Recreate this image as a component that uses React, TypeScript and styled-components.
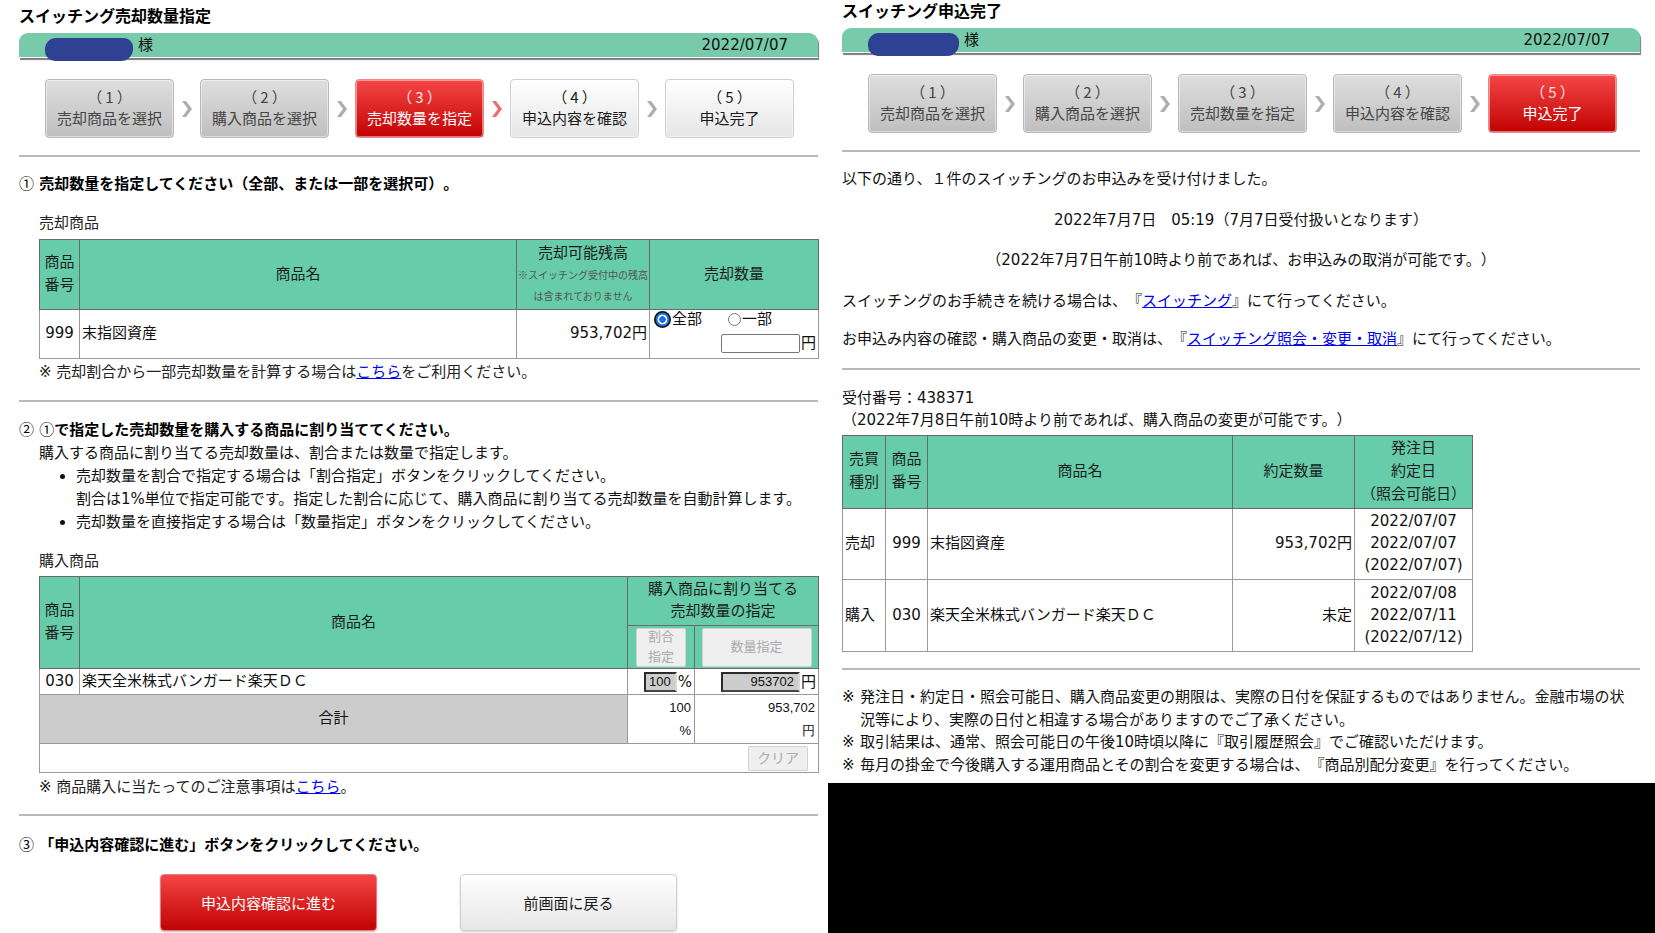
import React from "react";
import styled, { createGlobalStyle, css } from "styled-components";

const GlobalStyle = createGlobalStyle`
  html, body { margin: 0; padding: 0; background: #fff; }
  body {
    font-family: "DejaVu Sans", "Noto Sans CJK JP", sans-serif;
    font-size: 15px;
    color: #111;
    text-spacing-trim: space-all;
  }
  * { box-sizing: border-box; }
`;

const Page = styled.div`
  display: flex;
  width: 1655px;
  height: 933px;
  overflow: hidden;
`;

const LeftPane = styled.div`
  width: 828px;
  height: 933px;
  padding: 7px 10px 0 19px;
  background: #fff;
`;

const RightColumn = styled.div`
  width: 827px;
  height: 933px;
  background: #000;
`;

const RightPane = styled.div`
  height: 783px;
  padding: 2px 15px 0 14px;
  background: #fff;
`;

const PageTitle = styled.h1`
  margin: 0;
  font-size: 16px;
  font-weight: bold;
  line-height: 20px;
  color: #000;
`;

const CustomerBar = styled.div`
  margin-top: 6px;
  height: 25px;
  display: flex;
  align-items: center;
  padding: 0 30px 0 26px;
  background: #77cbab;
  border-radius: 9px 9px 0 0;
  border-bottom: 1px solid #fff;
  box-shadow: 1px 2px 1px #7c7c7c;
  font-size: 15px;
  line-height: 20px;
  color: #111;
`;

const NameMask = styled.span<{ $w: number }>`
  align-self: flex-start;
  margin-top: 5px;
  width: ${(p) => p.$w}px;
  height: 23px;
  border-radius: 11px 9px 12px 10px;
  background: #2e4192;
  filter: blur(0.6px);
`;

const Honorific = styled.span`
  margin-left: 5px;
`;

const BarDate = styled.span`
  margin-left: auto;
`;

const StepList = styled.div`
  margin-top: 21px;
  display: flex;
  align-items: center;
  padding-left: 26px;
`;

type StepState = "done" | "current" | "todo";

const stepSkins = {
  done: css`
    background: linear-gradient(#dedede, #bfbfbf);
    border: 1px solid #b8b8b8;
    color: #444;
  `,
  current: css`
    background: linear-gradient(#f64646, #c10202);
    border: 1px solid #e98a8a;
    color: #fff;
  `,
  todo: css`
    background: linear-gradient(#ffffff, #e5e5e5);
    border: 1px solid #cfcfcf;
    color: #1a1a1a;
  `,
};

const Step = styled.div<{ $state: StepState }>`
  width: 129px;
  height: 59px;
  border-radius: 4px;
  display: flex;
  flex-direction: column;
  align-items: center;
  justify-content: center;
  padding-bottom: 1px;
  font-size: 15px;
  line-height: 23px;
  box-shadow: inset 0 0 0 1px rgba(255, 255, 255, 0.45);
  ${(p) => stepSkins[p.$state]}
`;

const StepNum = styled.span<{ $state: StepState }>`
  font-family: "Noto Sans CJK JP", sans-serif;
  letter-spacing: 3px;
  padding-left: 3px;
  color: ${(p) => (p.$state === "current" ? "#ffe4e4" : "inherit")};
`;

const StepArrow = styled.div`
  width: 26px;
  display: flex;
  justify-content: center;
  align-items: center;
`;

const Divider = styled.div<{ $mt: number }>`
  margin-top: ${(p) => p.$mt}px;
  height: 2px;
  background: #b9b9b9;
`;

const SectionHeading = styled.h2<{ $mt: number }>`
  margin: ${(p) => p.$mt}px 0 0 0;
  font-size: 15px;
  font-weight: bold;
  line-height: 20px;
  color: #000;
`;

const CircledNum = styled.span`
  font-family: "Noto Sans CJK JP", sans-serif;
  font-weight: normal;
`;

const SubLabel = styled.div<{ $mt: number }>`
  margin: ${(p) => p.$mt}px 0 0 20px;
  line-height: 20px;
  color: #222;
`;

const Indented = styled.div<{ $mt: number }>`
  margin: ${(p) => p.$mt}px 0 0 20px;
  line-height: 23px;
  color: #111;
`;

const BulletList = styled.ul`
  margin: 0;
  padding-left: 37px;
  line-height: 23px;
`;

const DataTable = styled.table<{ $mt: number; $ml: number; $w: number }>`
  margin: ${(p) => p.$mt}px 0 0 ${(p) => p.$ml}px;
  width: ${(p) => p.$w}px;
  border-collapse: collapse;
  table-layout: fixed;
  font-size: 15px;
`;

const Row = styled.tr<{ $h: number }>`
  height: ${(p) => p.$h}px;
`;

const Th = styled.th<{ $flush?: boolean; $tall?: boolean }>`
  background: #66cca9;
  border: 1px solid #6a6a6a;
  font-weight: normal;
  text-align: center;
  vertical-align: middle;
  padding: 0 0 ${(p) => (p.$flush ? 0 : 2)}px 0;
  line-height: ${(p) => (p.$tall ? 23 : 22)}px;
  color: #1d1d1d;
`;

const Td = styled.td<{
  $align?: "left" | "center" | "right";
  $valign?: "top" | "middle";
  $gray?: boolean;
  $num?: boolean;
  $flush?: boolean;
}>`
  border: 1px solid #9c9898;
  padding: 0 2px ${(p) => (p.$flush ? 0 : 2)}px 2px;
  text-align: ${(p) => p.$align ?? "left"};
  vertical-align: ${(p) => p.$valign ?? "middle"};
  background: ${(p) => (p.$gray ? "#cccccc" : "#fff")};
  line-height: 22px;
  color: #111;
  ${(p) =>
    p.$num &&
    css`
      font-family: "Liberation Sans", Arial, sans-serif;
      font-size: 13px;
      line-height: 23px;
      padding: 0 3px 1px 2px;
    `}
`;

const SmallNote = styled.div`
  font-size: 10px;
  line-height: 21px;
  color: #555;
  white-space: nowrap;
  font-family: "Noto Sans CJK JP", sans-serif;
`;

const RadioLine = styled.div`
  display: flex;
  align-items: center;
  height: 18px;
  padding-left: 2px;
  line-height: 18px;
`;

const RadioDot = styled.span<{ $checked?: boolean; $gap?: number }>`
  display: inline-block;
  margin-left: ${(p) => p.$gap ?? 0}px;
  border-radius: 50%;
  ${(p) =>
    p.$checked
      ? css`
          width: 17px;
          height: 17px;
          background: radial-gradient(circle, #1a6fe6 0 3px, #fff 3.6px 4.6px, #1a6fe6 5.2px 6.6px, #111 7.2px);
        `
      : css`
          width: 13px;
          height: 13px;
          border: 1px solid #777;
          background: #fff;
        `}
`;

const RadioText = styled.span`
  margin-left: 1px;
`;

const AmountLine = styled.div`
  display: flex;
  justify-content: flex-end;
  align-items: center;
  margin-top: 6px;
  line-height: 19px;
`;

const TextBox = styled.span<{ $w: number; $filled?: boolean }>`
  display: inline-block;
  vertical-align: middle;
  width: ${(p) => p.$w}px;
  height: ${(p) => (p.$filled ? 20 : 19)}px;
  font-family: "Liberation Sans", Arial, sans-serif;
  font-size: 13px;
  line-height: 16px;
  text-align: right;
  padding-right: 4px;
  ${(p) =>
    p.$filled
      ? css`
          background: #cdcdcd;
          border-style: solid;
          border-width: 2px;
          border-color: #2c2c2c #d8d8d8 #444 #2c2c2c;
          color: #111;
        `
      : css`
          background: #fff;
          border: 1px solid #777;
          border-radius: 2px;
        `}
`;

const Unit = styled.span`
  margin-left: 1px;
  vertical-align: middle;
`;

const NoteLine = styled.div<{ $mt: number; $ml?: number }>`
  margin: ${(p) => p.$mt}px 0 0 ${(p) => p.$ml ?? 20}px;
  line-height: 20px;
  color: #222;
`;

const TextLink = styled.a`
  color: #0000ee;
  text-decoration: underline;
`;

const MiniButton = styled.span<{ $w: number; $h: number }>`
  display: inline-flex;
  align-items: center;
  justify-content: center;
  width: ${(p) => p.$w}px;
  height: ${(p) => p.$h}px;
  background: #efefef;
  border: 1px solid #d2d2d2;
  border-radius: 2px;
  color: #ababab;
  font-size: 13px;
  line-height: 20px;
  overflow: hidden;
  text-align: center;
  vertical-align: middle;
`;

const ClearButton = styled(MiniButton)`
  font-size: 14px;
  margin-right: 8px;
`;

const ActionRow = styled.div`
  margin-top: 19px;
  display: flex;
  gap: 83px;
  padding-left: 141px;
`;

const ActionButton = styled.div<{ $primary?: boolean }>`
  width: 217px;
  height: 57px;
  border-radius: 4px;
  display: flex;
  align-items: center;
  justify-content: center;
  font-size: 15px;
  ${(p) =>
    p.$primary
      ? css`
          background: linear-gradient(#f54444, #c00303);
          border: 1px solid #e47d7d;
          color: #fff;
          box-shadow: 0 1px 2px rgba(0, 0, 0, 0.25);
        `
      : css`
          background: linear-gradient(#ffffff, #e6e6e6);
          border: 1px solid #cfcfcf;
          color: #1a1a1a;
          box-shadow: 0 1px 2px rgba(0, 0, 0, 0.2);
        `}
`;

const Paragraph = styled.p<{ $mt: number; $center?: boolean }>`
  margin: ${(p) => p.$mt}px 0 0 0;
  line-height: 20px;
  text-align: ${(p) => (p.$center ? "center" : "left")};
  color: #111;
`;

const ReceiptBlock = styled.div`
  margin-top: 17px;
  line-height: 22px;
  color: #111;
`;

const NoteList = styled.div`
  margin-top: 16px;
  line-height: 22.5px;
  color: #111;
`;

const NoteItem = styled.div`
  display: flex;
`;

const NoteMark = styled.span`
  flex: 0 0 18px;
`;

const NoteBody = styled.span`
  flex: 1;
`;

const Chevron = ({ color }: { color: string }) => (
  <svg width="10" height="16" viewBox="0 0 10 16">
    <polygon points="0,0 4,0 10,8 4,16 0,16 6,8" fill={color} />
  </svg>
);

const STEP_LABELS = ["売却商品を選択", "購入商品を選択", "売却数量を指定", "申込内容を確認", "申込完了"];

const StepFlow = ({ current }: { current: number }) => (
  <StepList>
    {STEP_LABELS.map((label, i) => {
      const n = i + 1;
      const state: StepState = n < current ? "done" : n === current ? "current" : "todo";
      return (
        <React.Fragment key={label}>
          <Step $state={state}>
            <StepNum $state={state}>（{n}）</StepNum>
            <span>{label}</span>
          </Step>
          {n < STEP_LABELS.length && (
            <StepArrow>
              <Chevron color={n === current ? "#f26b6b" : "#adadad"} />
            </StepArrow>
          )}
        </React.Fragment>
      );
    })}
  </StepList>
);

const Header = ({ title, current, mask }: { title: string; current: number; mask: number }) => (
  <>
    <PageTitle>{title}</PageTitle>
    <CustomerBar>
      <NameMask $w={mask} />
      <Honorific>様</Honorific>
      <BarDate>2022/07/07</BarDate>
    </CustomerBar>
    <StepFlow current={current} />
    <Divider $mt={17} />
  </>
);

const SellSection = () => (
  <>
    <SectionHeading $mt={16}>
      <CircledNum>①</CircledNum> 売却数量を指定してください（全部、または一部を選択可）。
    </SectionHeading>
    <SubLabel $mt={19}>売却商品</SubLabel>
    <DataTable $mt={6} $ml={20} $w={779}>
      <colgroup>
        <col style={{ width: 40 }} />
        <col style={{ width: 437 }} />
        <col style={{ width: 133 }} />
        <col style={{ width: 169 }} />
      </colgroup>
      <tbody>
        <Row $h={70}>
          <Th $tall>
            商品
            <br />
            番号
          </Th>
          <Th>商品名</Th>
          <Th>
            売却可能残高
            <SmallNote>※スイッチング受付中の残高</SmallNote>
            <SmallNote>は含まれておりません</SmallNote>
          </Th>
          <Th>売却数量</Th>
        </Row>
        <Row $h={49}>
          <Td $align="center">999</Td>
          <Td>末指図資産</Td>
          <Td $align="right">953,702円</Td>
          <Td $valign="top" $flush>
            <RadioLine>
              <RadioDot $checked />
              <RadioText>全部</RadioText>
              <RadioDot $gap={26} />
              <RadioText>一部</RadioText>
            </RadioLine>
            <AmountLine>
              <TextBox $w={79} />
              <Unit>円</Unit>
            </AmountLine>
          </Td>
        </Row>
      </tbody>
    </DataTable>
    <NoteLine $mt={3}>
      ※ 売却割合から一部売却数量を計算する場合は<TextLink>こちら</TextLink>をご利用ください。
    </NoteLine>
    <Divider $mt={18} />
  </>
);

const BuySection = () => (
  <>
    <SectionHeading $mt={17}>
      <CircledNum>②</CircledNum> <CircledNum>①</CircledNum>
      で指定した売却数量を購入する商品に割り当ててください。
    </SectionHeading>
    <Indented $mt={2}>
      購入する商品に割り当てる売却数量は、割合または数量で指定します。
      <BulletList>
        <li>
          売却数量を割合で指定する場合は「割合指定」ボタンをクリックしてください。
          <br />
          割合は1%単位で指定可能です。指定した割合に応じて、購入商品に割り当てる売却数量を自動計算します。
        </li>
        <li>売却数量を直接指定する場合は「数量指定」ボタンをクリックしてください。</li>
      </BulletList>
    </Indented>
    <SubLabel $mt={17}>購入商品</SubLabel>
    <DataTable $mt={5} $ml={20} $w={779}>
      <colgroup>
        <col style={{ width: 40 }} />
        <col style={{ width: 548 }} />
        <col style={{ width: 67 }} />
        <col style={{ width: 124 }} />
      </colgroup>
      <tbody>
        <Row $h={49}>
          <Th rowSpan={2} $tall>
            商品
            <br />
            番号
          </Th>
          <Th rowSpan={2}>商品名</Th>
          <Th colSpan={2}>
            購入商品に割り当てる
            <br />
            売却数量の指定
          </Th>
        </Row>
        <Row $h={43}>
          <Th $flush>
            <MiniButton $w={50} $h={39}>
              割合
              <br />
              指定
            </MiniButton>
          </Th>
          <Th $flush>
            <MiniButton $w={110} $h={39}>数量指定</MiniButton>
          </Th>
        </Row>
        <Row $h={26}>
          <Td $align="center">030</Td>
          <Td>楽天全米株式バンガード楽天ＤＣ</Td>
          <Td $align="right" $flush>
            <TextBox $w={33} $filled>
              100
            </TextBox>
            <Unit>%</Unit>
          </Td>
          <Td $align="right" $flush>
            <TextBox $w={79} $filled>
              953702
            </TextBox>
            <Unit>円</Unit>
          </Td>
        </Row>
        <Row $h={49}>
          <Td colSpan={2} $align="center" $gray>
            合計
          </Td>
          <Td $align="right" $num>
            100
            <br />%
          </Td>
          <Td $align="right" $num>
            953,702
            <br />円
          </Td>
        </Row>
        <Row $h={29}>
          <Td colSpan={4} $align="right" $flush>
            <ClearButton $w={60} $h={25}>
              クリア
            </ClearButton>
          </Td>
        </Row>
      </tbody>
    </DataTable>
    <NoteLine $mt={4}>
      ※ 商品購入に当たってのご注意事項は<TextLink>こちら</TextLink>。
    </NoteLine>
    <Divider $mt={17} />
  </>
);

const ConfirmSection = () => (
  <>
    <SectionHeading $mt={18}>
      <CircledNum>③</CircledNum> 「申込内容確認に進む」ボタンをクリックしてください。
    </SectionHeading>
    <ActionRow>
      <ActionButton $primary>申込内容確認に進む</ActionButton>
      <ActionButton>前画面に戻る</ActionButton>
    </ActionRow>
  </>
);

const DateStack = ({ lines }: { lines: string[] }) => (
  <>
    {lines.map((l, i) => (
      <React.Fragment key={i}>
        {i > 0 && <br />}
        {l}
      </React.Fragment>
    ))}
  </>
);

const CompletePane = () => (
  <RightPane>
    <Header title="スイッチング申込完了" current={5} mask={91} />
    <Paragraph $mt={17}>以下の通り、１件のスイッチングのお申込みを受け付けました。</Paragraph>
    <Paragraph $mt={21} $center>
      2022年7月7日　05:19（7月7日受付扱いとなります）
    </Paragraph>
    <Paragraph $mt={20} $center>
      （2022年7月7日午前10時より前であれば、お申込みの取消が可能です。）
    </Paragraph>
    <Paragraph $mt={21}>
      スイッチングのお手続きを続ける場合は、『<TextLink>スイッチング</TextLink>』にて行ってください。
    </Paragraph>
    <Paragraph $mt={18}>
      お申込み内容の確認・購入商品の変更・取消は、『<TextLink>スイッチング照会・変更・取消</TextLink>』にて行ってください。
    </Paragraph>
    <Divider $mt={19} />
    <ReceiptBlock>
      受付番号：438371
      <br />
      （2022年7月8日午前10時より前であれば、購入商品の変更が可能です。）
    </ReceiptBlock>
    <DataTable $mt={4} $ml={0} $w={630}>
      <colgroup>
        <col style={{ width: 43 }} />
        <col style={{ width: 42 }} />
        <col style={{ width: 305 }} />
        <col style={{ width: 122 }} />
        <col style={{ width: 118 }} />
      </colgroup>
      <tbody>
        <Row $h={73}>
          <Th $tall>
            売買
            <br />
            種別
          </Th>
          <Th $tall>
            商品
            <br />
            番号
          </Th>
          <Th>商品名</Th>
          <Th>約定数量</Th>
          <Th $tall>
            <DateStack lines={["発注日", "約定日", "（照会可能日）"]} />
          </Th>
        </Row>
        <Row $h={71}>
          <Td>売却</Td>
          <Td $align="center">999</Td>
          <Td>末指図資産</Td>
          <Td $align="right">953,702円</Td>
          <Td $align="center">
            <DateStack lines={["2022/07/07", "2022/07/07", "(2022/07/07)"]} />
          </Td>
        </Row>
        <Row $h={72}>
          <Td>購入</Td>
          <Td $align="center">030</Td>
          <Td>楽天全米株式バンガード楽天ＤＣ</Td>
          <Td $align="right">未定</Td>
          <Td $align="center">
            <DateStack lines={["2022/07/08", "2022/07/11", "(2022/07/12)"]} />
          </Td>
        </Row>
      </tbody>
    </DataTable>
    <Divider $mt={16} />
    <NoteList>
      <NoteItem>
        <NoteMark>※</NoteMark>
        <NoteBody>
          発注日・約定日・照会可能日、購入商品変更の期限は、実際の日付を保証するものではありません。金融市場の状
          <br />
          況等により、実際の日付と相違する場合がありますのでご了承ください。
        </NoteBody>
      </NoteItem>
      <NoteItem>
        <NoteMark>※</NoteMark>
        <NoteBody>取引結果は、通常、照会可能日の午後10時頃以降に『取引履歴照会』でご確認いただけます。</NoteBody>
      </NoteItem>
      <NoteItem>
        <NoteMark>※</NoteMark>
        <NoteBody>毎月の掛金で今後購入する運用商品とその割合を変更する場合は、『商品別配分変更』を行ってください。</NoteBody>
      </NoteItem>
    </NoteList>
  </RightPane>
);

export default function App() {
  return (
    <>
      <GlobalStyle />
      <Page>
        <LeftPane>
          <Header title="スイッチング売却数量指定" current={3} mask={88} />
          <SellSection />
          <BuySection />
          <ConfirmSection />
        </LeftPane>
        <RightColumn>
          <CompletePane />
        </RightColumn>
      </Page>
    </>
  );
}
